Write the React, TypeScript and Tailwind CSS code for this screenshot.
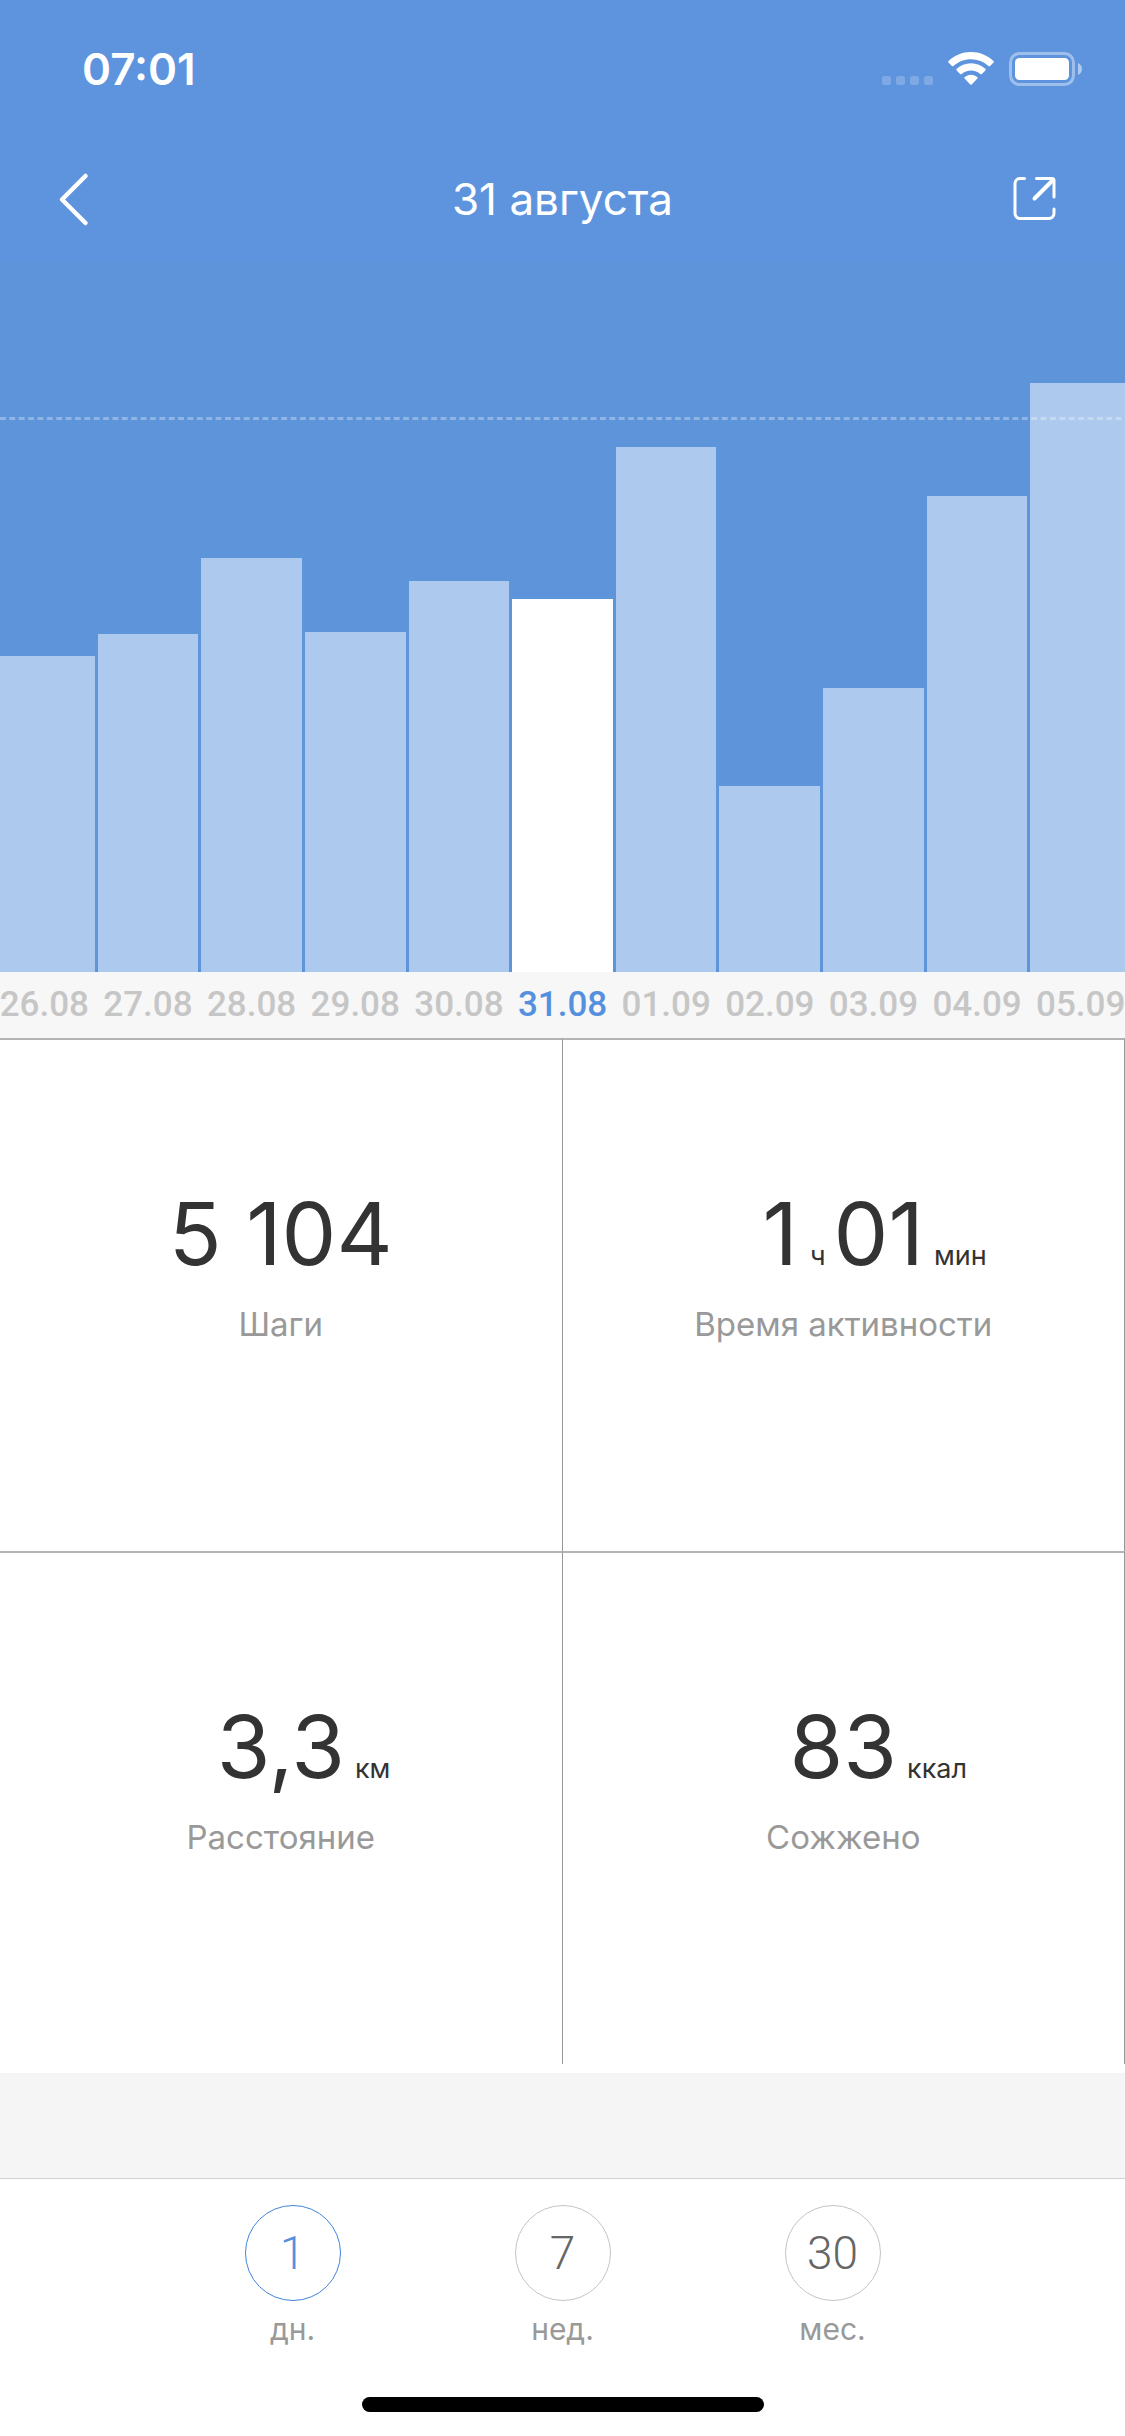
import { useState } from "react";
import type { ReactNode } from "react";

const days = [
  { date: "26.08", height: 316 },
  { date: "27.08", height: 338 },
  { date: "28.08", height: 414 },
  { date: "29.08", height: 340 },
  { date: "30.08", height: 391 },
  { date: "31.08", height: 373 },
  { date: "01.09", height: 525 },
  { date: "02.09", height: 186 },
  { date: "03.09", height: 284 },
  { date: "04.09", height: 476 },
  { date: "05.09", height: 589 },
];

const periods = [
  { value: "1", label: "дн." },
  { value: "7", label: "нед." },
  { value: "30", label: "мес." },
];

function StatusBar() {
  return (
    <div className="flex items-center justify-between pt-[42px] pr-[43px] pl-[82px]">
      <span className="text-[44px] leading-[54px] font-semibold">07:01</span>
      <svg className="h-[34px] w-[200px]" viewBox="882 52 200 34" fill="currentColor" aria-hidden="true">
        <g opacity="0.2">
          <rect x="882" y="76" width="9" height="9" rx="2.5" />
          <rect x="896" y="76" width="9" height="9" rx="2.5" />
          <rect x="910" y="76" width="9" height="9" rx="2.5" />
          <rect x="924" y="76" width="9" height="9" rx="2.5" />
        </g>
        <path d="M971 52c8.700 0 16.600 3.400 22.500 8.900.5.5.5 1.200 0 1.700l-3.400 3.400c-.4.400-1.100.4-1.600 0A25.500 25.500 0 0 0 971 59.200c-6.800 0-12.900 2.600-17.500 6.800-.5.400-1.200.4-1.600 0l-3.400-3.400c-.5-.5-.5-1.200 0-1.700C954.400 55.400 962.300 52 971 52Z" />
        <path d="M971 63.200c5.500 0 10.500 2.100 14.300 5.600.5.500.5 1.200 0 1.700l-3.400 3.400c-.4.400-1.100.4-1.600 0A13.800 13.800 0 0 0 971 70.400c-3.600 0-6.800 1.300-9.300 3.500-.5.400-1.200.4-1.600 0l-3.400-3.400c-.5-.5-.5-1.200 0-1.700 3.800-3.500 8.800-5.600 14.300-5.600Z" />
        <path d="M971 74.800c2.500 0 4.700.9 6.400 2.400.4.400.4 1 0 1.400l-5.700 6c-.4.400-1 .4-1.400 0l-5.700-6c-.4-.4-.4-1 0-1.400 1.700-1.500 3.900-2.400 6.400-2.400Z" />
        <rect x="1010.500" y="53.500" width="63" height="31" rx="9" fill="none" stroke="currentColor" strokeWidth="3" opacity="0.4" />
        <rect x="1015" y="58" width="54" height="22" rx="4.500" />
        <path d="M1078 63c2.400.9 4 3.200 4 6s-1.600 5.100-4 6Z" opacity="0.5" />
      </svg>
    </div>
  );
}

function Header() {
  return (
    <header className="bg-[#5e94de] pb-[27px] text-white">
      <StatusBar />
      <div className="flex items-center justify-between px-[55px] pt-[67px]">
        <button type="button" aria-label="Назад" className="flex h-[72px] w-[60px] items-center">
          <svg className="h-[60px] w-[48px]" viewBox="0 0 48 60" fill="none" stroke="currentColor" strokeWidth="4.500" strokeLinecap="round" strokeLinejoin="round">
            <path d="M30.500 7 7 30.500 30.500 54" />
          </svg>
        </button>
        <h1 className="text-[44px] leading-[60px]">31 августа</h1>
        <button type="button" aria-label="Поделиться" className="flex h-[72px] w-[60px] items-center justify-center">
          <svg className="h-[60px] w-[60px]" viewBox="6 0 60 60" fill="none" stroke="currentColor" strokeWidth="3" strokeLinecap="round" strokeLinejoin="round">
            <path d="M20.500 9.500H16a5 5 0 0 0-5 5v30a5 5 0 0 0 5 5h29a5 5 0 0 0 5-5v-4.500" />
            <path d="M32.500 9.500H48a2 2 0 0 1 2 2V28" />
            <path d="M30.500 29.500 48.500 11.500" strokeWidth="4" />
          </svg>
        </button>
      </div>
    </header>
  );
}

function StepsChart({ selected, onSelect }: { selected: string; onSelect: (date: string) => void }) {
  return (
    <section aria-label="Шаги по дням" className="overflow-hidden">
      <div className="relative bg-[#5e95da] pt-[121px]">
        <div className="-mx-[6px] flex items-end gap-[3px]">
          {days.map((day) => (
            <button
              key={day.date}
              type="button"
              aria-label={day.date}
              aria-pressed={day.date === selected}
              onClick={() => onSelect(day.date)}
              className={day.date === selected ? "flex-1 bg-white" : "flex-1 bg-[#adc9ee]"}
              style={{ height: day.height }}
            />
          ))}
        </div>
        <svg className="pointer-events-none absolute inset-x-0 top-[155px] h-[3px] w-full" aria-hidden="true">
          <line x1="0" y1="1.500" x2="100%" y2="1.500" stroke="#ffffff" strokeOpacity="0.3" strokeWidth="3" pathLength="960" strokeDasharray="5 3" />
        </svg>
      </div>
      <div className="bg-[#f7f7f7]">
        <div className="-mx-[6px] flex gap-[3px] py-[9px] font-[Roboto,sans-serif] text-[35px] leading-[48px] font-medium">
          {days.map((day) => (
            <span
              key={day.date}
              className={
                day.date === selected
                  ? "flex w-0 flex-1 justify-center text-[#5590de]"
                  : "flex w-0 flex-1 justify-center text-[#c6c6c6]"
              }
            >
              {day.date}
            </span>
          ))}
        </div>
      </div>
    </section>
  );
}

function Stat({ value, unit, label }: { value: ReactNode; unit?: string; label: string }) {
  return (
    <div className="border-t-2 border-r border-t-[#b3b3b3] border-r-[#999999] pt-[141px] pb-[205px] text-[#333333]">
      <div className="grid grid-cols-[1fr_auto_1fr] items-baseline gap-x-[10px]">
        <span className="col-start-2 text-[87px] leading-[106px] whitespace-nowrap">{value}</span>
        {unit && <span className="text-[27px] leading-none">{unit}</span>}
      </div>
      <div className="pt-[15px] text-center text-[33px] leading-[44px] text-[#999999]">{label}</div>
    </div>
  );
}

function PeriodPicker() {
  const [period, setPeriod] = useState("1");
  return (
    <nav aria-label="Период" className="border-t border-[#d0d0d0] bg-white pt-[26px]">
      <div className="flex justify-center gap-[150px]">
        {periods.map((item) => (
          <button
            key={item.value}
            type="button"
            aria-pressed={item.value === period}
            onClick={() => setPeriod(item.value)}
            className="flex w-[120px] flex-col items-center"
          >
            <span
              className={
                item.value === period
                  ? "flex size-[96px] items-center justify-center rounded-full border border-[#3f84dc] font-[Roboto,sans-serif] text-[46px] font-light text-[#5590de]"
                  : "flex size-[96px] items-center justify-center rounded-full border border-[#c4c4c4] font-[Roboto,sans-serif] text-[46px] font-light text-[#666666]"
              }
            >
              {item.value}
            </span>
            <span className="pt-[8px] text-[30px] leading-[40px] text-[#999999]">{item.label}</span>
          </button>
        ))}
      </div>
      <div className="mx-auto mt-[48px] mb-[24px] h-[15px] w-[402px] rounded-full bg-black" />
    </nav>
  );
}

export default function App() {
  const [selected, setSelected] = useState("31.08");
  return (
    <div className="flex min-h-screen flex-col bg-white font-[Inter,sans-serif]">
      <Header />
      <StepsChart selected={selected} onSelect={setSelected} />
      <main className="grid grid-cols-2 pb-[9px]">
        <Stat value="5 104" label="Шаги" />
        <Stat
          value={
            <>
              1<span className="pr-[8px] pl-[12px] text-[27px] leading-none">ч</span>01
            </>
          }
          unit="мин"
          label="Время активности"
        />
        <Stat value="3,3" unit="км" label="Расстояние" />
        <Stat value="83" unit="ккал" label="Сожжено" />
      </main>
      <div className="min-h-[105px] grow bg-[#f5f5f5]" />
      <PeriodPicker />
    </div>
  );
}
